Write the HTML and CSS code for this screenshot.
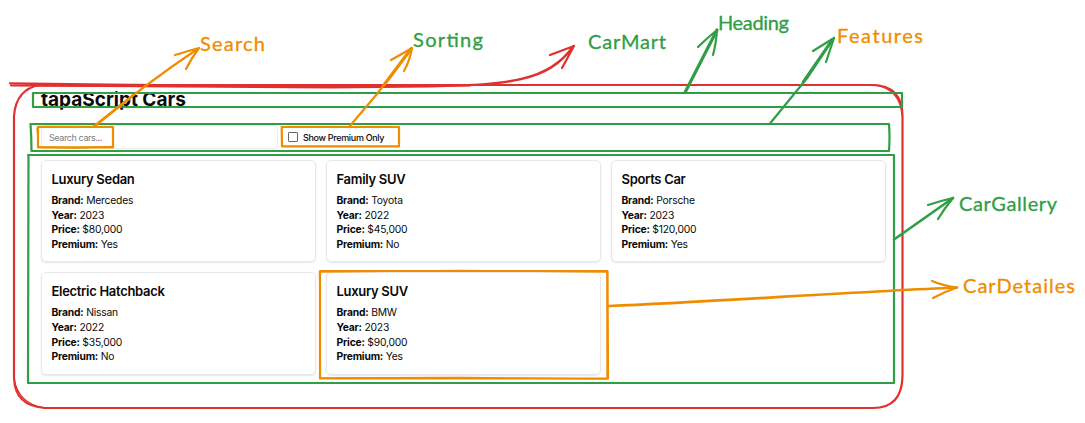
FILE: index.html
```html
<!DOCTYPE html>
<html lang="en">
<head>
<meta charset="utf-8">
<title>tapaScript Cars</title>
<link rel="stylesheet" href="styles.css">
</head>
<body>
<main class="app">
  <h1 class="heading">tapaScript Cars</h1>
  <div class="features">
    <input class="search" type="text" placeholder="Search cars..." aria-label="Search cars">
    <label class="premium"><span class="box"></span><span>Show Premium Only</span></label>
  </div>
  <section class="gallery">
    <article class="card"><h2>Luxury Sedan</h2><p><b>Brand:</b> Mercedes</p><p><b>Year:</b> 2023</p><p><b>Price:</b> $80,000</p><p><b>Premium:</b> Yes</p></article>
    <article class="card"><h2>Family SUV</h2><p><b>Brand:</b> Toyota</p><p><b>Year:</b> 2022</p><p><b>Price:</b> $45,000</p><p><b>Premium:</b> No</p></article>
    <article class="card"><h2>Sports Car</h2><p><b>Brand:</b> Porsche</p><p><b>Year:</b> 2023</p><p><b>Price:</b> $120,000</p><p><b>Premium:</b> Yes</p></article>
    <article class="card"><h2>Electric Hatchback</h2><p><b>Brand:</b> Nissan</p><p><b>Year:</b> 2022</p><p><b>Price:</b> $35,000</p><p><b>Premium:</b> No</p></article>
    <article class="card"><h2>Luxury SUV</h2><p><b>Brand:</b> BMW</p><p><b>Year:</b> 2023</p><p><b>Price:</b> $90,000</p><p><b>Premium:</b> Yes</p></article>
  </section>
</main>
<svg class="notes" width="1085" height="423" viewBox="0 0 1085 423">
  <g class="red">
    <path d="M45 85H872Q902 85 902.500 116V376Q902 408 873 408H45Q15 406 14 378L14 116Q16 89 40 85"/>
    <path class="thin" d="M14 378Q18 404 45 408M875 85Q900 89 902 115"/>
    <path d="M10 83.300L110 84.500 300 86.500 420 86.500C510 85 548 82 573 46.500M11 85.300L100 86 330 87.500 430 86.500C510 84.500 549 81 573 46.500M550 55L574 46 562 68"/>
    <path d="M38 85.500H470"/>
  </g>
  <g class="green">
    <path d="M33 93H902V107H33Z"/>
    <path d="M31 124H889Q890 138 889 151H31.500Q31.500 138 30.500 124"/>
    <path d="M28 155H894V383H28L28.500 155"/>
    <path class="bold" d="M685 92.500L717 30"/>
    <path d="M698 47Q706 39 717 30 716 44 713 55"/>
    <path d="M770 123.500L808 77 834 38"/>
    <path class="mid" d="M803 82L832 40"/>
    <path d="M813 51L834 38 826 62"/>
    <path class="mid" d="M894 239.500L953 198"/>
    <path d="M928 205Q940 201 953 198 944 209 938 219"/>
  </g>
  <g class="orange">
    <path d="M38 126.800L113 127V147.300H38Z"/>
    <path class="thin" d="M37 128L38.500 147 75 148 113 146.500"/>
    <path d="M281.700 127H399V146.300H282Z"/>
    <path d="M320 271H607.500L608 378.500H320Z"/>
    <path class="thin" d="M319.500 272L320.500 378 460 377.500 607 379V272L460 270.500Z"/>
    <path d="M94 126.500Q144 85 199 48M175 55Q188 51 199 48 191 59 186 69"/>
    <path class="mid" d="M94 126.500L130 98"/>
    <path d="M349 127L377 94 412 48M391 60Q402 54 412 48 410 60 404 71"/>
    <path class="bold" d="M384 85L411 49"/>
    <path class="mid" d="M609 306C710 302 850 292 957 287.500"/>
    <path d="M932 281Q944 286 957 287.500 944 292 933 298"/>
  </g>
  <g class="labels">
    <text class="fill-orange" x="200" y="51" textLength="65">Search</text>
    <text class="fill-green" x="413" y="47" textLength="70">Sorting</text>
    <text class="fill-green" x="588" y="49" textLength="78">CarMart</text>
    <text class="fill-green" x="718" y="29.500" textLength="71">Heading</text>
    <text class="fill-orange" x="837" y="43" textLength="86">Features</text>
    <text class="fill-green" x="959" y="211" textLength="98">CarGallery</text>
    <text class="fill-orange" x="963" y="293" textLength="112">CarDetailes</text>
  </g>
</svg>
</body>
</html>
```
FILE: styles.css
```css
* { box-sizing: border-box; }
body { margin: 0; background: #fff; color: #090909; font-family: Inter, "Liberation Sans", sans-serif; position: relative; height: 423px; overflow: hidden; }
.app { width: 886px; padding: 88px 0 0 41px; }
.heading { margin: 0; font-size: 19px; line-height: 24px; font-weight: 700; }
.features { display: flex; align-items: center; gap: 10px; height: 24px; margin-top: 13px; }
.search { width: 237px; height: 24px; border: 1px solid #ececec; border-radius: 4px; padding: 0 7px; font: 9px Inter, sans-serif; letter-spacing: -0.400px; background: #fff; }
.search::placeholder { color: #7b7d82; }
.premium { display: flex; align-items: center; gap: 5px; font-size: 9px; font-weight: 500; letter-spacing: -0.320px; }
.box { width: 10px; height: 10px; border: 1px solid #666; border-radius: 1px; }
.gallery { display: grid; grid-template-columns: repeat(3, 275px); gap: 10px; margin-top: 11px; }
.card { height: 102.300px; padding: 11px 9.500px; border: 1px solid #e8e8e8; border-radius: 5px; box-shadow: 0 1px 2px #0000001a; }
.card h2 { margin: 0 0 5.800px; font-size: 13px; line-height: 15px; font-weight: 600; letter-spacing: -0.300px; }
.card p { margin: 0; font-size: 10.300px; line-height: 14.800px; letter-spacing: -0.200px; white-space: nowrap; }
.card b { font-weight: 700; }
.notes { position: absolute; left: 0; top: 0; fill: none; stroke-width: 2.200; stroke-linecap: round; stroke-linejoin: round; }
.red { stroke: #e03131; }
.green { stroke: #2f9e44; }
.orange { stroke: #f08c00; }
.thin { stroke-width: 1.300; }
.mid { stroke-width: 2.700; }
.bold { stroke-width: 3.200; }
.labels { font: 400 20px Excalifont, Virgil, "Comic Sans MS", Lato, sans-serif; }
.labels text { stroke-width: 0.300; }
.fill-green { fill: #2f9e44; stroke: #2f9e44; }
.fill-orange { fill: #f08c00; stroke: #f08c00; }
```
